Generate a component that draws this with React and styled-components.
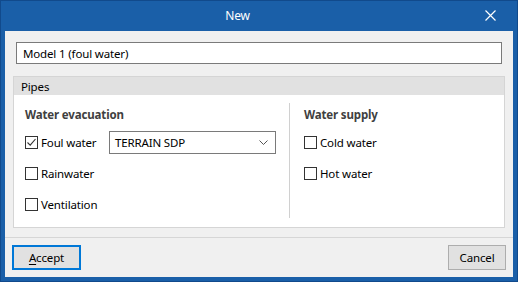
import React from "react";
import styled, { createGlobalStyle } from "styled-components";

const Global = createGlobalStyle`
  html, body { margin: 0; padding: 0; background: #ffffff; }
  body { font-family: "Noto Sans", "Liberation Sans", sans-serif; font-size: 11.5px; letter-spacing: -0.15px; }
  * { box-sizing: border-box; }
`;

const Window = styled.div`
  width: 518px;
  height: 282px;
  display: flex;
  flex-direction: column;
  background: #1a5fa8;
  padding: 0 5px 5px 5px;
  box-shadow: inset 0 0 0 1px #114a8c;
`;

const TitleBar = styled.div`
  height: 31px;
  flex: none;
  display: flex;
  align-items: center;
  color: #ffffff;
`;

const Title = styled.div`
  flex: 1;
  text-align: center;
  font-size: 12px;
  padding-left: 3px;
`;

const CloseButton = styled.div`
  width: 46px;
  height: 31px;
  display: flex;
  align-items: center;
  justify-content: center;
`;

const Body = styled.div`
  flex: 1;
  display: flex;
  flex-direction: column;
  background: #f0f0f0;
`;

const NameInput = styled.div`
  margin: 11px 11px 0 11px;
  height: 22px;
  border: 1px solid #7a7a7a;
  background: #ffffff;
  display: flex;
  align-items: center;
  padding-left: 6px;
  color: #000;
`;

const Panel = styled.div`
  margin: 12px 8px 0 8px;
  height: 152px;
  border: 1px solid #d5d5d5;
  display: flex;
  flex-direction: column;
  background: #ffffff;
`;

const PanelHeader = styled.div`
  height: 18px;
  background: #e1e1e1;
  display: flex;
  align-items: center;
  padding-left: 7px;
  color: #000;
`;

const PanelContent = styled.div`
  flex: 1;
  display: flex;
  padding: 8px 0 9px 11px;
`;

const Column = styled.div`
  width: ${(p) => p.$width}px;
  display: flex;
  flex-direction: column;
`;

const Divider = styled.div`
  width: 1px;
  background: #d0d0d0;
  margin: 0 14px 0 13px;
`;

const Heading = styled.div`
  height: 22px;
  display: flex;
  align-items: center;
  font-weight: bold;
  color: #404040;
  margin-bottom: 6px;
`;

const Rows = styled.div`
  display: flex;
  flex-direction: column;
  gap: 8px;
`;

const Row = styled.div`
  height: 23px;
  display: flex;
  align-items: center;
`;

const CheckLabel = styled.label`
  display: flex;
  align-items: center;
  gap: 3px;
  width: ${(p) => (p.$width ? `${p.$width}px` : "auto")};
  color: #000;
`;

const Box = styled.span`
  width: 13px;
  height: 13px;
  border: 1px solid #333333;
  background: #ffffff;
  display: flex;
  align-items: center;
  justify-content: center;
  flex: none;
`;

const Select = styled.div`
  width: 167px;
  height: 23px;
  border: 1px solid #7a7a7a;
  background: #ffffff;
  display: flex;
  align-items: center;
  justify-content: space-between;
  padding: 0 7px 0 5px;
  color: #000;
`;

const Footer = styled.div`
  margin-top: 9px;
  border-top: 1px solid #d6d6d6;
  flex: 1;
  display: flex;
  align-items: center;
  justify-content: space-between;
  padding: 0 7px;
`;

const Button = styled.div`
  height: 25px;
  width: ${(p) => p.$width}px;
  background: #e1e1e1;
  border: ${(p) => (p.$default ? "2px solid #0078d7" : "1px solid #adadad")};
  display: flex;
  align-items: center;
  justify-content: center;
  color: #000;
  u { text-decoration: underline; text-underline-offset: 2px; }
`;

function Check({ checked }) {
  return (
    <Box>
      {checked && (
        <svg width="11" height="11" viewBox="0 0 11 11">
          <path d="M1.5 5.5 L4.2 8.2 L9.5 2" fill="none" stroke="#333" strokeWidth="1.1" />
        </svg>
      )}
    </Box>
  );
}

function CheckItem({ label, checked, width }) {
  return (
    <CheckLabel $width={width}>
      <Check checked={checked} />
      <span>{label}</span>
    </CheckLabel>
  );
}

export default function App() {
  return (
    <>
      <Global />
      <Window>
        <TitleBar>
          <Title>New</Title>
          <CloseButton>
            <svg width="11" height="11" viewBox="0 0 11 11">
              <path d="M0.5 0.5 L10.5 10.5 M10.5 0.5 L0.5 10.5" stroke="#fff" strokeWidth="1.2" />
            </svg>
          </CloseButton>
        </TitleBar>
        <Body>
          <NameInput>Model 1 (foul water)</NameInput>
          <Panel>
            <PanelHeader>Pipes</PanelHeader>
            <PanelContent>
              <Column $width={251}>
                <Heading>Water evacuation</Heading>
                <Rows>
                  <Row>
                    <CheckItem label="Foul water" checked width={84} />
                    <Select>
                      <span>TERRAIN SDP</span>
                      <svg width="9" height="5" viewBox="0 0 9 5">
                        <path d="M0.5 0.5 L4.5 4.5 L8.5 0.5" fill="none" stroke="#555" strokeWidth="1" />
                      </svg>
                    </Select>
                  </Row>
                  <Row>
                    <CheckItem label="Rainwater" />
                  </Row>
                  <Row>
                    <CheckItem label="Ventilation" />
                  </Row>
                </Rows>
              </Column>
              <Divider />
              <Column $width={190}>
                <Heading>Water supply</Heading>
                <Rows>
                  <Row>
                    <CheckItem label="Cold water" />
                  </Row>
                  <Row>
                    <CheckItem label="Hot water" />
                  </Row>
                </Rows>
              </Column>
            </PanelContent>
          </Panel>
          <Footer>
            <Button $default $width={69}>
              <span><u>A</u>ccept</span>
            </Button>
            <Button $width={58}>Cancel</Button>
          </Footer>
        </Body>
      </Window>
    </>
  );
}
